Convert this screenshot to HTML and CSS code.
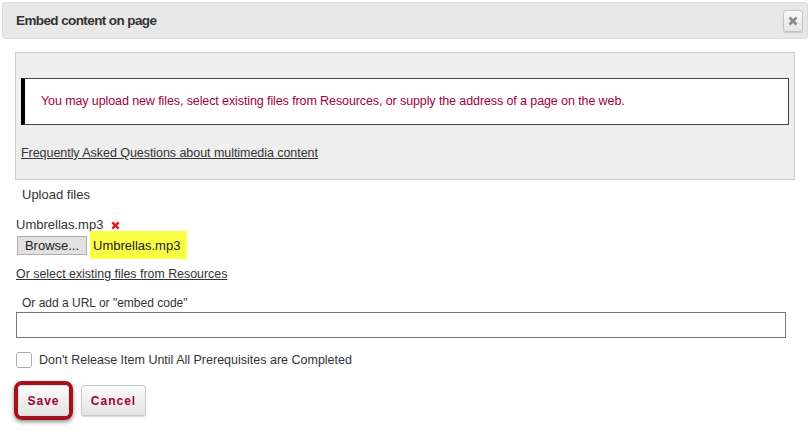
FILE: index.html
```html
<!DOCTYPE html>
<html>
<head>
<meta charset="utf-8">
<link rel="stylesheet" href="styles.css">
</head>
<body>
<div class="dialog">
  <div class="titlebar">
    <span class="title">Embed content on page</span>
    <button class="close" type="button" aria-label="Close">
      <svg width="10" height="10" viewBox="0 0 10 10"><path d="M1.5 1.5 L8.5 8.5 M8.5 1.5 L1.5 8.5" stroke="#888" stroke-width="2.6" stroke-linecap="butt"/></svg>
    </button>
  </div>
  <div class="content">
    <div class="infobox">
      <div class="message">You may upload new files, select existing files from Resources, or supply the address of a page on the web.</div>
      <a class="faq" href="#">Frequently Asked Questions about multimedia content</a>
    </div>
    <div class="label upload-label">Upload files</div>
    <div class="filename">Umbrellas.mp3 <span class="remove">
      <svg width="9" height="9" viewBox="0 0 9 9"><path d="M1.3 1.3 L7.7 7.7 M7.7 1.3 L1.3 7.7" stroke="#e8141b" stroke-width="2.4"/></svg>
    </span></div>
    <div class="browse-row">
      <button class="browse" type="button">Browse...</button>
      <span class="chosen">Umbrellas.mp3</span>
    </div>
    <a class="resources" href="#">Or select existing files from Resources</a>
    <div class="label url-label">Or add a URL or "embed code"</div>
    <input class="url" type="text">
    <label class="check-row"><span class="checkbox"></span><span>Don't Release Item Until All Prerequisites are Completed</span></label>
    <div class="actions">
      <span class="save-ring"><button class="btn" type="button">Save</button></span>
      <button class="btn cancel" type="button">Cancel</button>
    </div>
  </div>
</div>
</body>
</html>
```
FILE: styles.css
```css
* { box-sizing: border-box; }
html, body { margin: 0; padding: 0; background: #fff; }
body {
  font-family: "Liberation Sans", Arial, sans-serif;
  color: #333;
  font-size: 12px;
}
.dialog { width: 810px; height: 435px; overflow: hidden; }
.titlebar {
  margin: 2px 2px 0 2px;
  height: 37px;
  background: #e8e8e8;
  border: 1px solid #dcdcdc;
  border-radius: 3px;
  display: flex;
  align-items: center;
  justify-content: space-between;
  padding: 0 4px 0 13px;
}
.title {
  font-weight: bold;
  font-size: 13.5px;
  color: #333;
  letter-spacing: -0.6px;
}
.close {
  width: 20px;
  height: 22px;
  margin-top: 1px;
  border: 1px solid #c4c4c4;
  border-radius: 3px;
  background: linear-gradient(#fafafa, #e6e6e6);
  box-shadow: 0 1px 1px rgba(0,0,0,0.15);
  padding: 0;
  display: flex;
  align-items: center;
  justify-content: center;
}
.content {
  padding: 13px 15px 0 16px;
  display: flex;
  flex-direction: column;
  align-items: flex-start;
}
.infobox {
  align-self: stretch;
  margin-left: -1px;
  background: #eeeeee;
  border: 1px solid #cfcfcf;
  padding: 25px 5px 0 5px;
  height: 128px;
  display: flex;
  flex-direction: column;
  align-items: flex-start;
}
.message {
  align-self: stretch;
  height: 47px;
  background: #fff;
  border: 1px solid #444;
  border-left: 4px solid #000;
  color: #a0003c;
  font-size: 12.5px;
  letter-spacing: -0.1px;
  display: flex;
  align-items: center;
  padding-left: 16px;
  padding-bottom: 1px;
}
.faq {
  margin-top: 21px;
  color: #333;
  font-size: 12.5px;
  letter-spacing: -0.05px;
  text-decoration: underline;
}
.label { font-size: 12px; }
.upload-label {
  margin-top: 7px;
  margin-left: 6px;
  font-size: 13px;
}
.filename {
  margin-top: 15px;
  font-size: 13px;
  line-height: 15px;
  display: flex;
  align-items: center;
  gap: 8px;
}
.remove { display: inline-flex; margin-top: 2px; }
.browse-row {
  margin-top: -1px;
  display: flex;
  align-items: center;
}
.browse {
  margin-left: 1px;
  height: 19px;
  width: 70px;
  padding: 0;
  font-family: "Liberation Sans", Arial, sans-serif;
  font-size: 13px;
  color: #222;
  background: #e1e1e1;
  border: 1px solid #adadad;
  border-radius: 0;
}
.chosen {
  margin-left: 3px;
  background: #fbff44;
  height: 28px;
  width: 97px;
  display: flex;
  align-items: center;
  padding-left: 3px;
  font-size: 13px;
  color: #222;
}
.resources {
  margin-top: 8px;
  font-size: 12.4px;
  color: #333;
  text-decoration: underline;
}
.url-label {
  margin-top: 15px;
  margin-left: 6px;
}
.url {
  margin-top: 2px;
  width: 770px;
  height: 26px;
  border: 1px solid #777;
  background: #fff;
}
.check-row {
  margin-top: 14px;
  display: flex;
  align-items: center;
  gap: 7px;
  font-size: 12.5px;
}
.checkbox {
  width: 16px;
  height: 16px;
  border: 1px solid #aaa;
  border-radius: 3px;
  background: #fff;
}
.actions {
  margin-top: 13px;
  margin-left: -2px;
  display: flex;
  align-items: center;
  gap: 8px;
}
.save-ring {
  display: inline-flex;
  border: 4px solid #a3111c;
  border-radius: 8px;
  box-shadow: 0 2px 4px rgba(0,0,0,0.45);
}
.btn {
  font-family: "Liberation Sans", Arial, sans-serif;
  font-weight: bold;
  font-size: 12px;
  letter-spacing: 1px;
  color: #a0003c;
  background: linear-gradient(#fbfbfb, #e4e4e4);
  border: 1px solid #c8c8c8;
  border-radius: 3px;
  height: 31px;
  padding: 0 11px;
}
.save-ring .btn {
  border-radius: 4px;
  border-color: #ddd;
  width: 51px;
  padding: 0;
}
.cancel {
  width: 65px;
  padding: 0;
  box-shadow: 0 1px 1px rgba(0,0,0,0.15);
}
```
